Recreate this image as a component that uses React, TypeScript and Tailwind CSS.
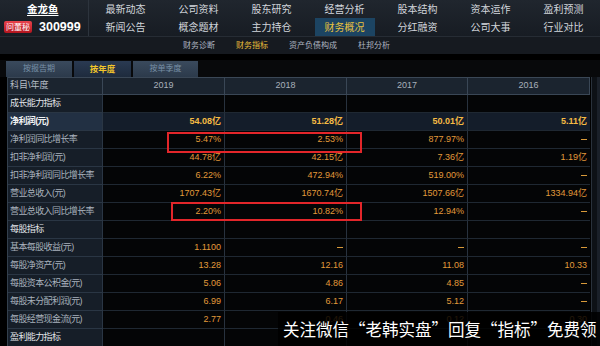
import React from "react";

const topNav = [
  ["最新动态", "新闻公告"],
  ["公司资料", "概念题材"],
  ["股东研究", "主力持仓"],
  ["经营分析", "财务概况"],
  ["股本结构", "分红融资"],
  ["资本运作", "公司大事"],
  ["盈利预测", "行业对比"],
];

const subNav = ["财务诊断", "财务指标", "资产负债构成", "杜邦分析"];

type Row = { label: string; section?: boolean; strong?: boolean; values?: string[] };

const rows: Row[] = [
  { label: "成长能力指标", section: true },
  { label: "净利润(元)", strong: true, values: ["54.08亿", "51.28亿", "50.01亿", "5.11亿"] },
  { label: "净利润同比增长率", values: ["5.47%", "2.53%", "877.97%", "--"] },
  { label: "扣非净利润(元)", values: ["44.78亿", "42.15亿", "7.36亿", "1.19亿"] },
  { label: "扣非净利润同比增长率", values: ["6.22%", "472.94%", "519.00%", "--"] },
  { label: "营业总收入(元)", values: ["1707.43亿", "1670.74亿", "1507.66亿", "1334.94亿"] },
  { label: "营业总收入同比增长率", values: ["2.20%", "10.82%", "12.94%", "--"] },
  { label: "每股指标", section: true },
  { label: "基本每股收益(元)", values: ["1.1100", "--", "--", "--"] },
  { label: "每股净资产(元)", values: ["13.28", "12.16", "11.08", "10.33"] },
  { label: "每股资本公积金(元)", values: ["5.06", "4.86", "4.85", "--"] },
  { label: "每股未分配利润(元)", values: ["6.99", "6.17", "5.12", "--"] },
  { label: "每股经营现金流(元)", values: ["2.77", "0.46", "0.12", "0.30"] },
  { label: "盈利能力指标", section: true },
];

const years = ["2019", "2018", "2017", "2016"];

function ValueCell({ v, strong, last }: { v?: string; strong?: boolean; last?: boolean }) {
  return (
    <div
      className={`h-[18px] flex items-center justify-end pr-[3px] border-b border-[#1f2832] ${last ? "" : "border-r border-r-[#28323e]"} ${
        strong ? "bg-[#141d2a] text-[#f6bb44] font-bold" : "bg-[#040506] text-[#e29a3a]"
      } text-[9px]`}
    >
      {v === "--" ? <span className="inline-block w-[6px] h-px bg-[#d89a3a]" /> : v}
    </div>
  );
}

export default function App() {
  return (
    <div className="relative w-[600px] h-[346px] overflow-hidden bg-black font-['Liberation_Sans','Noto_Sans_CJK_SC',sans-serif]">
      {/* top bar */}
      <div className="flex h-[36px] bg-gradient-to-b from-[#20262e] to-[#171c23]">
        <div className="w-[89px] border-r border-[#2d343d] flex flex-col pl-[4px]">
          <div className="h-[18px] flex items-center pl-[23px]">
            <span className="text-[10.5px] font-bold text-white underline underline-offset-2 font-['Noto_Sans_CJK_SC',sans-serif]">金龙鱼</span>
          </div>
          <div className="h-[18px] flex items-center gap-[7px]">
            <span className="h-[12px] px-[2px] rounded-[2px] bg-gradient-to-b from-[#e8424c] to-[#b3141e] text-white text-[8px] leading-[12px] font-['Noto_Sans_CJK_SC',sans-serif]">
              问董秘
            </span>
            <span className="text-[12.5px] font-bold text-white">300999</span>
          </div>
        </div>
        <div className="flex-1 grid grid-cols-7">
          {topNav.map(([a, b], i) => (
            <div key={a} className="flex flex-col items-center text-[10px] text-[#d2d6dc]">
              <div className="h-[18px] flex items-center">{a}</div>
              <div
                className={`h-[18px] flex items-center ${
                  i === 3 ? "w-[60px] justify-center bg-[#1c4462] text-[#e9c23e]" : ""
                }`}
              >
                {b}
              </div>
            </div>
          ))}
        </div>
      </div>

      {/* sub nav */}
      <div className="h-[18px] flex items-center pl-[183px] gap-[21px] bg-[#161a20] border-t border-[#262c34] text-[8px] text-[#aeb6c0]">
        {subNav.map((s, i) => (
          <span key={s} className={i === 1 ? "text-[#e6bd3a]" : ""}>
            {s}
          </span>
        ))}
      </div>

      {/* tabs */}
      <div className="mt-[6px] flex items-end h-[17px] pl-[6px] gap-[2px] bg-[#08090b]">
        <div className="w-[66px] h-[16px] flex items-center justify-center bg-gradient-to-b from-[#3a4a5d] to-[#2c3a4b] text-[8px] text-[#7890a6]">
          按报告期
        </div>
        <div className="w-[57px] h-[16px] flex items-center justify-center bg-gradient-to-b from-[#2a3a52] to-[#1e2b3d] text-[8.5px] font-bold text-[#f2c62a]">
          按年度
        </div>
        <div className="w-[65px] h-[16px] flex items-center justify-center bg-gradient-to-b from-[#3a4a5d] to-[#2c3a4b] text-[8px] text-[#7890a6]">
          按单季度
        </div>
      </div>

      {/* table */}
      <div className="flex pl-[7px]">
        <div className="w-[582px] grid grid-cols-[95px_122px_122px_121px_122px] border-l border-[#34404d]">
          <div className="h-[18px] flex items-center pl-[2px] bg-[#1b242f] border-y border-r border-[#3a4756] text-[9px] text-[#b4bcc6]">
            科目\年度
          </div>
          {years.map((y) => (
            <div
              key={y}
              className="h-[18px] flex items-center justify-center bg-[#1b242f] border-y border-r border-[#3a4756] text-[9px] text-[#a8b0ba]"
            >
              {y}
            </div>
          ))}
          {rows.map((r) => (
            <React.Fragment key={r.label}>
              <div
                className={`h-[18px] flex items-center pl-[2px] border-b border-r border-[#2a3644] text-[9px] tracking-[-0.6px] ${
                  r.section
                    ? "bg-[#161e28] text-[#e2e6ea]"
                    : r.strong
                    ? "bg-[#223043] text-[#f0f2f4] font-bold"
                    : "bg-[#161e28] text-[#a9b2bd]"
                }`}
              >
                {r.label}
              </div>
              {[0, 1, 2, 3].map((i) => (
                <ValueCell key={i} v={r.values?.[i]} strong={r.strong} last={i === 3} />
              ))}
            </React.Fragment>
          ))}
        </div>
        {/* scrollbar */}
        <div className="ml-[2px] w-[9px] border-l border-[#2a323c] bg-[#0d1116] flex justify-end">
          <div className="w-[3px] bg-[#1a2029]" />
        </div>
      </div>

      {/* highlight boxes */}
      <div className="absolute left-[167px] top-[132px] w-[195px] h-[21px] border-2 border-[#e3262a]" />
      <div className="absolute left-[171px] top-[202px] w-[191px] h-[19px] border-2 border-[#e3262a]" />

      {/* watermark */}
      <div className="absolute left-[278px] top-[312px] w-[322px] h-[34px] bg-black/85 flex items-center pl-[5px] whitespace-nowrap overflow-hidden text-[16.5px] text-white font-['Noto_Sans_CJK_SC',sans-serif]">
        关注微信“老韩实盘”回复“指标”免费领
      </div>
    </div>
  );
}
